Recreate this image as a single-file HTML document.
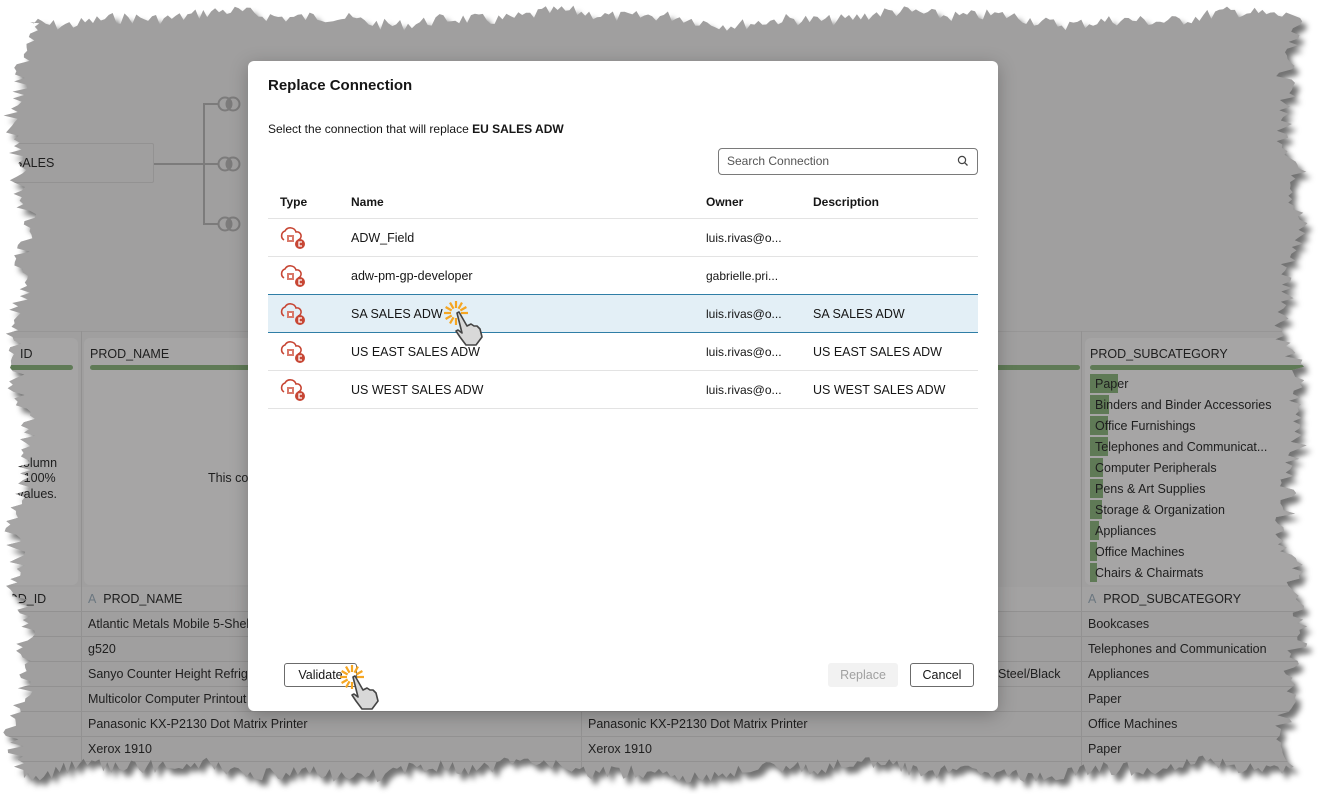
<!DOCTYPE html>
<html><head><meta charset="utf-8">
<style>
*{box-sizing:border-box;margin:0;padding:0}
body{width:1323px;height:794px;background:#fff;position:relative;overflow:hidden;font-family:"Liberation Sans",sans-serif;color:#1b1b1b}
#shadow{position:absolute;left:0;top:0}
#wrap{position:absolute;left:0;top:0;width:1323px;height:794px;background:#a09f9f}
.abs{position:absolute}
.t{position:absolute;font-size:12.5px;color:#1e1e1e;white-space:nowrap}
.card{position:absolute;top:338px;height:247px;background:#a6a5a5;border-radius:6px}
.gbar{position:absolute;height:5px;background:#5f7a56;border-radius:3px}
.vl{position:absolute;width:1px;background:#929191}
.hl{position:absolute;height:1px;background:#929191}
.sub{position:absolute;left:1090px;height:19px;background:#5f7a56}
#dlg{position:absolute;left:248px;top:61px;width:750px;height:650px;background:#fff;border-radius:6px;box-shadow:0 4px 18px rgba(0,0,0,.25)}
#dlg .t{color:#161616;font-size:12.5px}
.row{position:absolute;left:20px;width:710px;height:38px;border-bottom:1px solid #e3e3e3}
.btn{position:absolute;top:602px;height:24px;border:1px solid #6b6b6b;border-radius:3px;font-size:12.5px;text-align:center;line-height:22px;color:#161616;background:#fff}
</style></head><body>
<svg id="shadow" width="1323" height="794"><defs><filter id="b"><feGaussianBlur stdDeviation="3"/></filter></defs><polygon id="sp" fill="rgba(0,0,0,0.55)" filter="url(#b)" transform="translate(5,6)"/></svg>
<div id="wrap">
 <div class="abs" style="left:8px;top:143px;width:146px;height:40px;border:1px solid #939292;border-radius:2px"></div>
 <div class="t" style="left:14px;top:156px">SALES</div>
 <div class="hl" style="left:154px;top:163px;width:50px;background:#7c7b7b;height:2px"></div>
 <div class="vl" style="left:203px;top:103px;height:121px;background:#7c7b7b;width:2px"></div>
 <div class="hl" style="left:203px;top:103px;width:15px;background:#7c7b7b;height:2px"></div>
 <div class="hl" style="left:203px;top:223px;width:15px;background:#7c7b7b;height:2px"></div>
 <div class="hl" style="left:203px;top:163px;width:15px;background:#7c7b7b;height:2px"></div>
 <svg class="abs" style="left:216px;top:95px" width="34" height="140">
  <g fill="none" stroke="#7c7b7b" stroke-width="2"><circle cx="9" cy="9" r="6.5"/><circle cx="17" cy="9" r="6.5"/><circle cx="9" cy="69" r="6.5"/><circle cx="17" cy="69" r="6.5"/><circle cx="9" cy="129" r="6.5"/><circle cx="17" cy="129" r="6.5"/></g>
  <g fill="#7c7b7b"><ellipse cx="13" cy="9" rx="2.5" ry="5"/><ellipse cx="13" cy="69" rx="2.5" ry="5"/><ellipse cx="13" cy="129" rx="2.5" ry="5"/></g>
 </svg>
 <div class="hl" style="left:0;top:331px;width:1323px;background:#979696"></div>
 <div class="card" style="left:0;width:78px"></div>
 <div class="card" style="left:84px;width:500px"></div>
 <div class="card" style="left:1085px;width:240px"></div>
 <div class="t" style="left:20px;top:347px">ID</div>
 <div class="t" style="left:90px;top:347px">PROD_NAME</div>
 <div class="t" style="left:1090px;top:347px">PROD_SUBCATEGORY</div>
 <div class="gbar" style="left:0;top:365px;width:73px"></div>
 <div class="gbar" style="left:90px;top:365px;width:500px"></div>
 <div class="gbar" style="left:990px;top:365px;width:90px"></div>
 <div class="gbar" style="left:1090px;top:365px;width:233px"></div>
 <div class="t" style="left:7px;top:456px">s column</div>
 <div class="t" style="left:7px;top:471px">ns 100%</div>
 <div class="t" style="left:7px;top:487px">e values.</div>
 <div class="t" style="left:208px;top:471px">This co</div>
 <div class="sub" style="top:374px;width:28px"></div>
 <div class="sub" style="top:395px;width:19px"></div>
 <div class="sub" style="top:416px;width:18px"></div>
 <div class="sub" style="top:437px;width:18px"></div>
 <div class="sub" style="top:458px;width:13px"></div>
 <div class="sub" style="top:479px;width:13px"></div>
 <div class="sub" style="top:500px;width:12px"></div>
 <div class="sub" style="top:521px;width:9px"></div>
 <div class="sub" style="top:542px;width:7px"></div>
 <div class="sub" style="top:563px;width:7px"></div>
 <div class="t" style="left:1095px;top:377px">Paper</div>
 <div class="t" style="left:1095px;top:398px">Binders and Binder Accessories</div>
 <div class="t" style="left:1095px;top:419px">Office Furnishings</div>
 <div class="t" style="left:1095px;top:440px">Telephones and Communicat...</div>
 <div class="t" style="left:1095px;top:461px">Computer Peripherals</div>
 <div class="t" style="left:1095px;top:482px">Pens &amp; Art Supplies</div>
 <div class="t" style="left:1095px;top:503px">Storage &amp; Organization</div>
 <div class="t" style="left:1095px;top:524px">Appliances</div>
 <div class="t" style="left:1095px;top:545px">Office Machines</div>
 <div class="t" style="left:1095px;top:566px">Chairs &amp; Chairmats</div>
 <div class="abs" style="left:0;top:587px;width:1323px;height:24px;background:#a3a2a2"></div>
 <div class="vl" style="left:81px;top:331px;height:460px"></div>
 <div class="vl" style="left:581px;top:587px;height:200px"></div>
 <div class="vl" style="left:1081px;top:331px;height:460px"></div>
 <div class="hl" style="left:0;top:611px;width:1323px"></div>
 <div class="hl" style="left:0;top:636px;width:1323px"></div>
 <div class="hl" style="left:0;top:661px;width:1323px"></div>
 <div class="hl" style="left:0;top:686px;width:1323px"></div>
 <div class="hl" style="left:0;top:711px;width:1323px"></div>
 <div class="hl" style="left:0;top:736px;width:1323px"></div>
 <div class="hl" style="left:0;top:761px;width:1323px"></div>
 <div class="t" style="left:8px;top:592px">OD_ID</div>
 <div class="t" style="left:88px;top:592px"><span style="color:#6b7780">A</span>&nbsp; PROD_NAME</div>
 <div class="t" style="left:1088px;top:592px"><span style="color:#6b7780">A</span>&nbsp; PROD_SUBCATEGORY</div>
 <div class="t" style="left:88px;top:617px">Atlantic Metals Mobile 5-Shelf Bookcases</div>
 <div class="t" style="left:88px;top:642px">g520</div>
 <div class="t" style="left:88px;top:667px">Sanyo Counter Height Refrigerator</div>
 <div class="t" style="left:88px;top:692px">Multicolor Computer Printout Paper</div>
 <div class="t" style="left:88px;top:717px">Panasonic KX-P2130 Dot Matrix Printer</div>
 <div class="t" style="left:88px;top:742px">Xerox 1910</div>
 <div class="t" style="left:588px;top:717px">Panasonic KX-P2130 Dot Matrix Printer</div>
 <div class="t" style="left:588px;top:742px">Xerox 1910</div>
 <div class="t" style="left:998px;top:667px">Steel/Black</div>
 <div class="t" style="left:1088px;top:617px">Bookcases</div>
 <div class="t" style="left:1088px;top:642px">Telephones and Communication</div>
 <div class="t" style="left:1088px;top:667px">Appliances</div>
 <div class="t" style="left:1088px;top:692px">Paper</div>
 <div class="t" style="left:1088px;top:717px">Office Machines</div>
 <div class="t" style="left:1088px;top:742px">Paper</div>

 <div id="dlg">
  <div class="t" style="left:20px;top:16px;font-size:15px;font-weight:bold">Replace Connection</div>
  <div class="t" style="left:20px;top:61px;font-size:12px">Select the connection that will replace <b>EU SALES ADW</b></div>
  <div class="abs" style="left:470px;top:87px;width:260px;height:27px;border:1px solid #7a7a7a;border-radius:4px"></div>
  <div class="t" style="left:479px;top:93px;color:#555;font-size:12px">Search Connection</div>
  <svg class="abs" style="left:709px;top:94px" width="12" height="12"><circle cx="5" cy="5" r="3.6" fill="none" stroke="#444" stroke-width="1.2"/><line x1="7.6" y1="7.6" x2="10.5" y2="10.5" stroke="#444" stroke-width="1.3"/></svg>
  <div class="t" style="left:32px;top:134px;font-weight:bold;font-size:12px">Type</div>
  <div class="t" style="left:103px;top:134px;font-weight:bold;font-size:12px">Name</div>
  <div class="t" style="left:458px;top:134px;font-weight:bold;font-size:12px">Owner</div>
  <div class="t" style="left:565px;top:134px;font-weight:bold;font-size:12px">Description</div>
  <div class="row" style="top:119px;height:39px"></div>
  <div class="row" style="top:158px"></div>
  <div class="row" style="top:196px"></div>
  <div class="row" style="top:233px;height:39px;background:#e3eff6;border-top:1px solid #2f7ea6;border-bottom:1px solid #2f7ea6"></div>
  <div class="row" style="top:272px"></div>
  <div class="row" style="top:310px"></div>
  <div class="t" style="left:103px;top:170px">ADW_Field</div>
  <div class="t" style="left:458px;top:170px;font-size:12px">luis.rivas@o...</div>
  <div class="t" style="left:103px;top:208px">adw-pm-gp-developer</div>
  <div class="t" style="left:458px;top:208px;font-size:12px">gabrielle.pri...</div>
  <div class="t" style="left:103px;top:246px">SA SALES ADW</div>
  <div class="t" style="left:458px;top:246px;font-size:12px">luis.rivas@o...</div>
  <div class="t" style="left:565px;top:246px">SA SALES ADW</div>
  <div class="t" style="left:103px;top:284px">US EAST SALES ADW</div>
  <div class="t" style="left:458px;top:284px;font-size:12px">luis.rivas@o...</div>
  <div class="t" style="left:565px;top:284px">US EAST SALES ADW</div>
  <div class="t" style="left:103px;top:322px">US WEST SALES ADW</div>
  <div class="t" style="left:458px;top:322px;font-size:12px">luis.rivas@o...</div>
  <div class="t" style="left:565px;top:322px">US WEST SALES ADW</div>
  <div id="icons"></div>
  <div class="btn" style="left:36px;width:73px">Validate</div>
  <div class="btn" style="left:580px;width:70px;border-color:#f2f2f2;background:#f2f2f2;color:#a0a0a0">Replace</div>
  <div class="btn" style="left:662px;width:64px">Cancel</div>
  <svg class="abs" style="left:192px;top:236px" width="50" height="50" id="h1"></svg>
  <svg class="abs" style="left:88px;top:600px" width="50" height="52" id="h2"></svg>
 </div>
</div>
<script>
var s=7;function r(){s=(s*9301+49297)%233280;return s/233280;}
var P=[];
function edge(x0,y0,x1,y1,amp,n,inw){for(var i=0;i<n;i++){var t=i/n;var x=x0+(x1-x0)*t,y=y0+(y1-y0)*t;var d=(r()-0.5)*amp+Math.sin(t*23+inw)*amp*0.4+Math.sin(t*71)*amp*0.2;if(y0==y1)P.push([x,y+d]);else P.push([x+d,y]);}}
edge(30,18,1290,18,12,320,1);edge(1292,18,1292,770,18,220,2);edge(1290,770,20,770,14,320,3);edge(20,770,20,20,18,220,4);
var str=P.map(function(p){return p[0].toFixed(1)+"px "+p[1].toFixed(1)+"px"}).join(",");
document.getElementById("wrap").style.clipPath="polygon("+str+")";
document.getElementById("sp").setAttribute("points",P.map(function(p){return p[0].toFixed(1)+","+p[1].toFixed(1)}).join(" "));
var ic='<path d="M6 15 a5 5 0 0 1 1-9 a6 6 0 0 1 11 1 a4 4 0 0 1 2 8" fill="none" stroke="#c74634" stroke-width="1.6"/><rect x="9" y="10" width="7" height="7" fill="#d9796a"/><rect x="11" y="12" width="3" height="3" fill="#fff"/><circle cx="22" cy="19" r="5" fill="#c74634"/><path d="M24 17 h-3 v4 h3" fill="none" stroke="#fff" stroke-width="1.3"/>';
var h="";[158,196,234,272,310].forEach(function(t){h+='<svg class="abs" style="left:30px;top:'+(t+6)+'px" width="30" height="28">'+ic+'</svg>';});
document.getElementById("icons").innerHTML=h;
var hand='<g stroke="#f5a623" stroke-width="2.2">'+[0,30,60,90,120,150,180,210,240,270].map(function(a){var rad=a*Math.PI/180;return '<line x1="'+(16+Math.cos(rad)*5)+'" y1="'+(16-Math.sin(rad)*5)+'" x2="'+(16+Math.cos(rad)*12)+'" y2="'+(16-Math.sin(rad)*12)+'"/>'}).join("")+'</g><path d="M17 16 l2-1 l8 14 l4-2 l3 2 l3 0 l3 3 l2 8 l-6 8 l-10 0 l-6-8 l-4-6 l2-1 l4 3 z" fill="#d8d8d8" stroke="#444" stroke-width="1.6" stroke-linejoin="round"/>';
document.getElementById("h1").innerHTML=hand;document.getElementById("h2").innerHTML=hand;
</script>
</body></html>
